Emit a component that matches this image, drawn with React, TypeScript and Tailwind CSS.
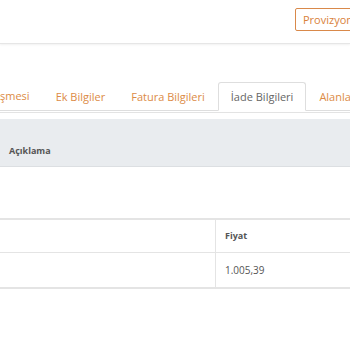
import React from "react";

const tabs = ["şmesi", "Ek Bilgiler", "Fatura Bilgileri", "İade Bilgileri", "Alanlar"];

export default function App() {
  return (
    <div
      className="w-[350px] h-[350px] overflow-hidden bg-white whitespace-nowrap"
      style={{ fontFamily: '"Open Sans", "Noto Sans", sans-serif' }}
    >
      {/* Header */}
      <div className="h-[44px] flex items-start pt-[8px] pl-[295px] border-b border-[#e6e6e6] shadow-[0_1px_2px_rgba(0,0,0,0.06)]">
        <button className="h-[23px] px-[7px] border border-[#d9894a] rounded-[2px] text-[11px] text-[#d9823b] leading-none">
          Provizyon Al
        </button>
      </div>

      {/* Tabs */}
      <div className="mt-[37px] flex items-end border-b border-[#dedede]">
        {tabs.map((t, i) => {
          const active = t === "İade Bilgileri";
          return (
            <div
              key={t}
              className={
                active
                  ? "h-[29px] pt-[2px] px-[12px] flex items-center text-[11px] text-[#666] bg-white border border-[#dedede] border-b-white rounded-t-[3px] -mb-px"
                  : i === 0
                  ? "h-[29px] pt-[2px] pr-[13px] flex items-center text-[11px] text-[#dc8b46]"
                  : "h-[29px] pt-[2px] px-[12px] flex items-center text-[11px] text-[#dc8b46] border border-transparent -mb-px"
              }
            >
              {t}
            </div>
          );
        })}
      </div>

      {/* Açıklama section */}
      <div className="mt-[1px] border-t border-[#e3e3e3]" />
      <div className="mt-[6px] h-[48px] bg-[#e9ecef] border-b border-[#dcdfe2] flex items-end pb-[9px] pl-[9px]">
        <span className="text-[9px] font-bold text-[#555]">Açıklama</span>
      </div>

      {/* Table */}
      <div className="mt-[51px] border-t-2 border-b-2 border-[#e4e4e4]">
        <div className="flex h-[33px] border-b border-[#e4e4e4]">
          <div className="w-[216px] border-r border-[#e4e4e4]" />
          <div className="flex-1 flex items-center pl-[9px] text-[9px] font-bold text-[#555]">Fiyat</div>
        </div>
        <div className="flex h-[34px]">
          <div className="w-[216px] border-r border-[#e4e4e4]" />
          <div className="flex-1 flex items-center pl-[9px] text-[10px] text-[#555]">1.005,39</div>
        </div>
      </div>
    </div>
  );
}
